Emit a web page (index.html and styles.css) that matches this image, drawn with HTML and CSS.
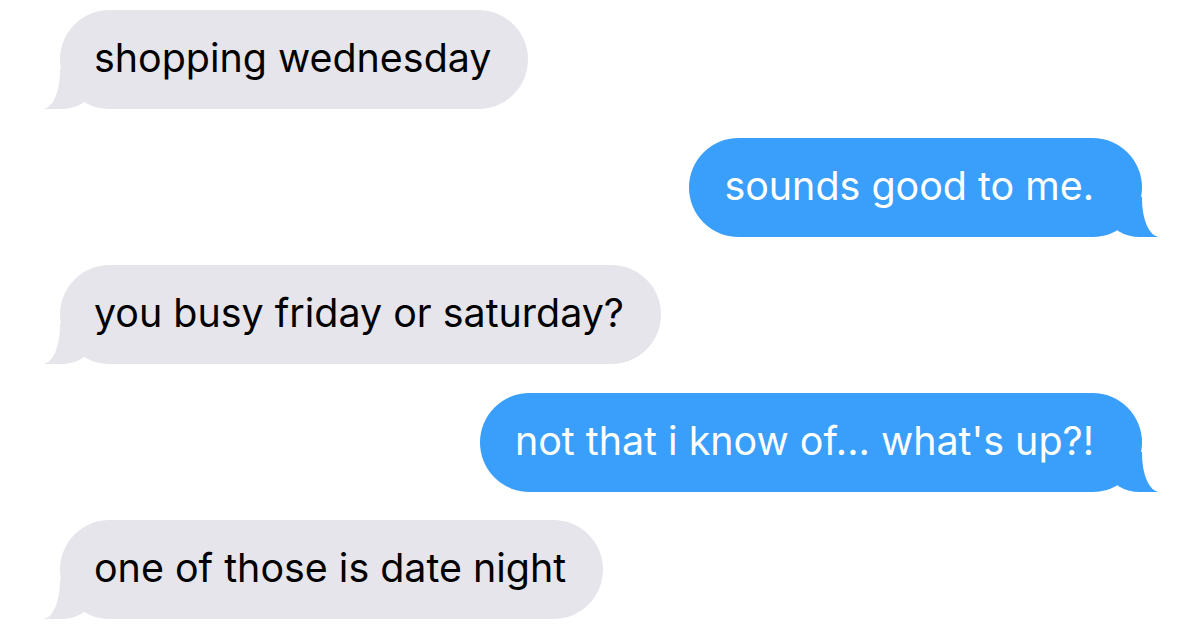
FILE: index.html
```html
<!DOCTYPE html>
<html>
<head>
<meta charset="utf-8">
<link rel="stylesheet" href="styles.css">
</head>
<body>
<div class="thread">
  <div class="bubble received">shopping wednesday</div>
  <div class="bubble sent">sounds good to me.</div>
  <div class="bubble received">you busy friday or saturday?</div>
  <div class="bubble sent">not that i know of... what's up?!</div>
  <div class="bubble received">one of those is date night</div>
</div>
</body>
</html>
```
FILE: styles.css
```css
html, body {
  margin: 0;
  padding: 0;
  background: #ffffff;
  width: 1200px;
  height: 628px;
  overflow: hidden;
}
.thread {
  display: flex;
  flex-direction: column;
  gap: 28.5px;
  padding-top: 10px;
  font-family: "Inter", "Noto Sans", sans-serif;
}
.bubble {
  position: relative;
  font-size: 39.4px;
  line-height: 46px;
  padding: 25px 36px 28px;
  border-radius: 50px;
  white-space: nowrap;
  letter-spacing: 0;
}
.received {
  align-self: flex-start;
  margin-left: 60px;
  background: #e6e5eb;
  color: #000;
  padding-left: 34px;
  padding-right: 37px;
}
.sent {
  align-self: flex-end;
  margin-right: 58px;
  background: #3a9ffb;
  color: #fff;
  padding-left: 35px;
  padding-right: 48px;
}
.bubble::before,
.bubble::after {
  content: "";
  position: absolute;
  bottom: 0;
  height: 40px;
}
.sent::before {
  right: -16px;
  width: 48px;
  background: #3a9ffb;
  border-bottom-left-radius: 30px 20px;
  z-index: 0;
}
.sent::after {
  right: -46px;
  width: 46px;
  background: #ffffff;
  border-bottom-left-radius: 17px 38px;
  z-index: 1;
}
.received::before {
  left: -17px;
  width: 48px;
  background: #e6e5eb;
  border-bottom-right-radius: 30px 20px;
  z-index: 0;
}
.received::after {
  left: -46px;
  width: 46px;
  background: #ffffff;
  border-bottom-right-radius: 17px 38px;
  z-index: 1;
}
```
